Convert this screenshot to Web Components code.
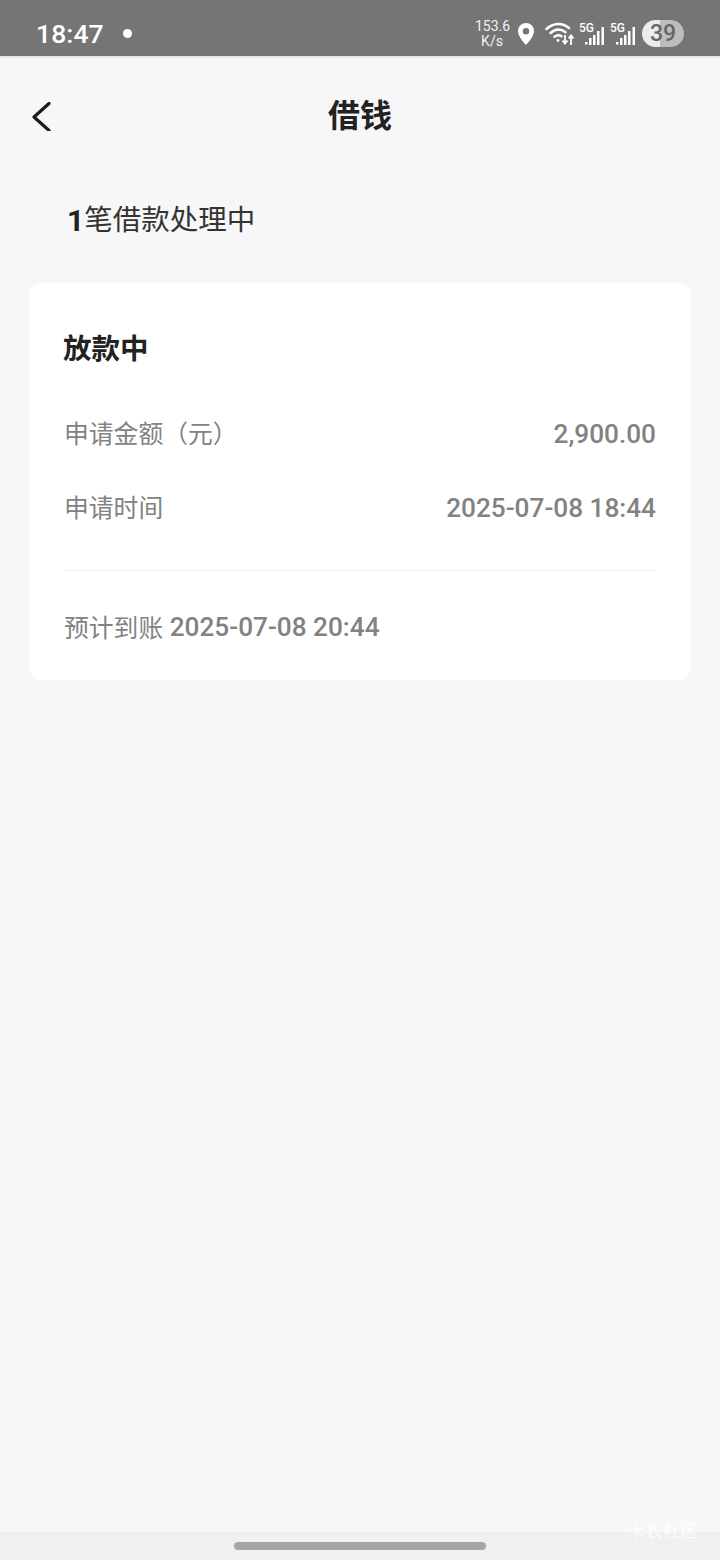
<!DOCTYPE html>
<html>
<head>
<meta charset="utf-8">
<style>
  html, body { margin: 0; padding: 0; height: 100%; }
  body { background: #f7f7f7; font-family: Roboto, "Noto Sans CJK SC", sans-serif; }
  loan-app { height: 1560px; }
</style>
</head>
<body>
<loan-app></loan-app>
<script>
const FONT = 'Roboto, "Noto Sans CJK SC", sans-serif';

class StatusBar extends HTMLElement {
  connectedCallback() {
    this.attachShadow({ mode: 'open' }).innerHTML = `
      <style>
        :host { display: flex; flex: none; height: 56px; box-sizing: border-box; padding-top: 11px; align-items: center; background: #757575; color: #fff; font-family: ${FONT}; box-shadow: 0 1px 3px rgba(0,0,0,.12); position: relative; }
        .time { font-size: 26.500px; font-weight: 500; margin-left: 36px; width: 87px; letter-spacing: .1px; }
        .dot { width: 9px; height: 9px; border-radius: 50%; background: #fff; }
        .right { margin-left: auto; margin-right: 36px; display: flex; align-items: center; }
        .speed { font-size: 14px; line-height: 15px; text-align: center; width: 34px; color: #f2f2f2; }
        svg { display: block; flex: none; }
        .pin { margin-left: 9px; }
        .wifi { margin-left: 11px; margin-right: -1px; }
        .sig { margin-left: 5px; }
        .battery { margin-left: 6px; width: 42px; height: 27px; border-radius: 14px; font-size: 23px; line-height: 29px; font-weight: 500; color: #666; display: flex; align-items: center; justify-content: center; background: linear-gradient(90deg, #ececec 0 18px, #bdbdbd 18px); }
      </style>
      <div class="time">18:47</div>
      <div class="dot"></div>
      <div class="right">
        <div class="speed">153.6<br>K/s</div>
        <svg class="pin" width="16" height="22" viewBox="0 0 16 22"><path fill="#fff" fill-rule="evenodd" d="M8 0a8 8 0 0 1 8 8c0 4.800-4.600 10.400-8 14C4.600 18.400 0 12.800 0 8a8 8 0 0 1 8-8zm0 5a3.200 3.200 0 1 0 0 6.400A3.200 3.200 0 0 0 8 5z"/></svg>
        <svg class="wifi" width="30" height="24" viewBox="0 0 30 24" fill="none" stroke="#fff" stroke-linecap="round"><path stroke-width="2.500" d="M1.500 7C8.500 .5 17.500 .5 24 6"/><path stroke-width="2.500" d="M5.500 11c5-4.300 10.500-4.300 15-.8"/><path stroke-width="2.500" d="M9.500 14.800c2.500-1.800 5-1.800 7-.5"/><circle cx="13" cy="18.500" r="1.400" fill="#fff" stroke="none"/><path stroke-width="1.800" stroke-linecap="butt" d="M20 13v8M17.500 18.500l2.500 3 2.500-3M26 23v-9M23.500 16.500l2.500-3 2.500 3"/></svg>
        <signal-5g class="sig"></signal-5g>
        <signal-5g class="sig"></signal-5g>
        <div class="battery">39</div>
      </div>`;
  }
}

class Signal5g extends HTMLElement {
  connectedCallback() {
    this.attachShadow({ mode: 'open' }).innerHTML = `
      <style>
        :host { display: block; width: 26px; height: 26px; position: relative; font-family: ${FONT}; }
        span { position: absolute; left: 0; top: 0; font-size: 12px; line-height: 14px; font-weight: 500; color: #fff; }
        svg { position: absolute; left: 0; top: 0; }
      </style>
      <span>5G</span>
      <svg width="26" height="26" viewBox="0 0 26 26" fill="#fff"><rect x="6" y="21" width="2.500" height="2.500"/><rect x="10" y="17" width="2.500" height="7"/><rect x="14" y="14" width="2.500" height="10"/><rect x="18" y="10" width="2.500" height="14"/><rect x="22.500" y="6" width="2.500" height="18"/></svg>`;
  }
}

class NavHeader extends HTMLElement {
  connectedCallback() {
    this.attachShadow({ mode: 'open' }).innerHTML = `
      <style>
        :host { display: flex; flex: none; height: 120px; align-items: center; justify-content: center; position: relative; font-family: ${FONT}; }
        .back { position: absolute; left: 32px; top: 45px; }
        h1 { margin: 0; font-size: 32px; font-weight: 700; color: #222; line-height: 120px; }
      </style>
      <svg class="back" width="20" height="30" viewBox="0 0 20 30" fill="none" stroke="#1c1c1c" stroke-width="3.200" stroke-linecap="round" stroke-linejoin="round"><path d="M17 2.500 2 16l15 13.500"/></svg>
      <h1><slot></slot></h1>`;
  }
}

class InfoRow extends HTMLElement {
  connectedCallback() {
    this.attachShadow({ mode: 'open' }).innerHTML = `
      <style>
        :host { display: flex; justify-content: space-between; align-items: center; height: 74px; font-family: ${FONT}; color: #828282; }
        .k { font-size: 24.800px; padding-bottom: 2px; }
        .v { font-size: 26.200px; font-weight: 500; color: #828282; padding-top: 2px; }
      </style>
      <span class="k">${this.getAttribute('label')}</span>
      <span class="v"><slot></slot></span>`;
  }
}

class LoanCard extends HTMLElement {
  connectedCallback() {
    this.attachShadow({ mode: 'open' }).innerHTML = `
      <style>
        :host { display: block; margin: 0 29px; background: #fff; border-radius: 13px; padding: 0 35px; height: 397px; box-sizing: border-box; font-family: ${FONT}; }
        h2 { margin: 0 0 0 -1px; padding-top: 46px; height: 113px; box-sizing: border-box; font-size: 28.500px; line-height: 42px; font-weight: 700; color: #222; }
        .rows { display: flex; flex-direction: column; }
        hr { border: 0; height: 1px; background: #eeeeee; margin: 26px 0 0; }
        .eta { display: flex; align-items: center; height: 112px; color: #828282; font-size: 24.800px; }
        .eta span { padding-bottom: 2px; }
        .eta b { font-size: 26.200px; font-weight: 500; color: #828282; margin-left: 6.500px; padding-bottom: 1px; }
      </style>
      <h2>放款中</h2>
      <div class="rows">
        <info-row label="申请金额（元）">2,900.00</info-row>
        <info-row label="申请时间">2025-07-08 18:44</info-row>
      </div>
      <hr>
      <div class="eta"><span>预计到账</span><b>2025-07-08 20:44</b></div>`;
  }
}

class HomeBar extends HTMLElement {
  connectedCallback() {
    this.attachShadow({ mode: 'open' }).innerHTML = `
      <style>
        :host { display: flex; flex: none; height: 28px; margin-top: auto; background: #f0f0f2; justify-content: center; position: relative; font-family: ${FONT}; }
        .pill { width: 252px; height: 8px; margin-top: 10px; border-radius: 4px; background: #a6a6a6; }
        .mark { position: absolute; right: 22px; top: -13px; font-size: 17.500px; line-height: 24px; color: rgba(255,255,255,.8); }
      </style>
      <div class="pill"></div>
      <div class="mark">卡农社区</div>`;
  }
}

class LoanApp extends HTMLElement {
  connectedCallback() {
    this.attachShadow({ mode: 'open' }).innerHTML = `
      <style>
        :host { display: flex; flex-direction: column; background: #f7f7f7; font-family: ${FONT}; }
        .summary { flex: none; height: 107px; padding: 0 0 0 67px; display: flex; align-items: flex-start; font-size: 28.500px; line-height: 89px; color: #333; }
        .summary b { font-weight: 700; color: #222; font-size: 30px; }
      </style>
      <status-bar></status-bar>
      <nav-header>借钱</nav-header>
      <div class="summary"><b>1</b><span>笔借款处理中</span></div>
      <loan-card></loan-card>
      <home-bar></home-bar>`;
  }
}

customElements.define('signal-5g', Signal5g);
customElements.define('status-bar', StatusBar);
customElements.define('nav-header', NavHeader);
customElements.define('info-row', InfoRow);
customElements.define('loan-card', LoanCard);
customElements.define('home-bar', HomeBar);
customElements.define('loan-app', LoanApp);
</script>
</body>
</html>
